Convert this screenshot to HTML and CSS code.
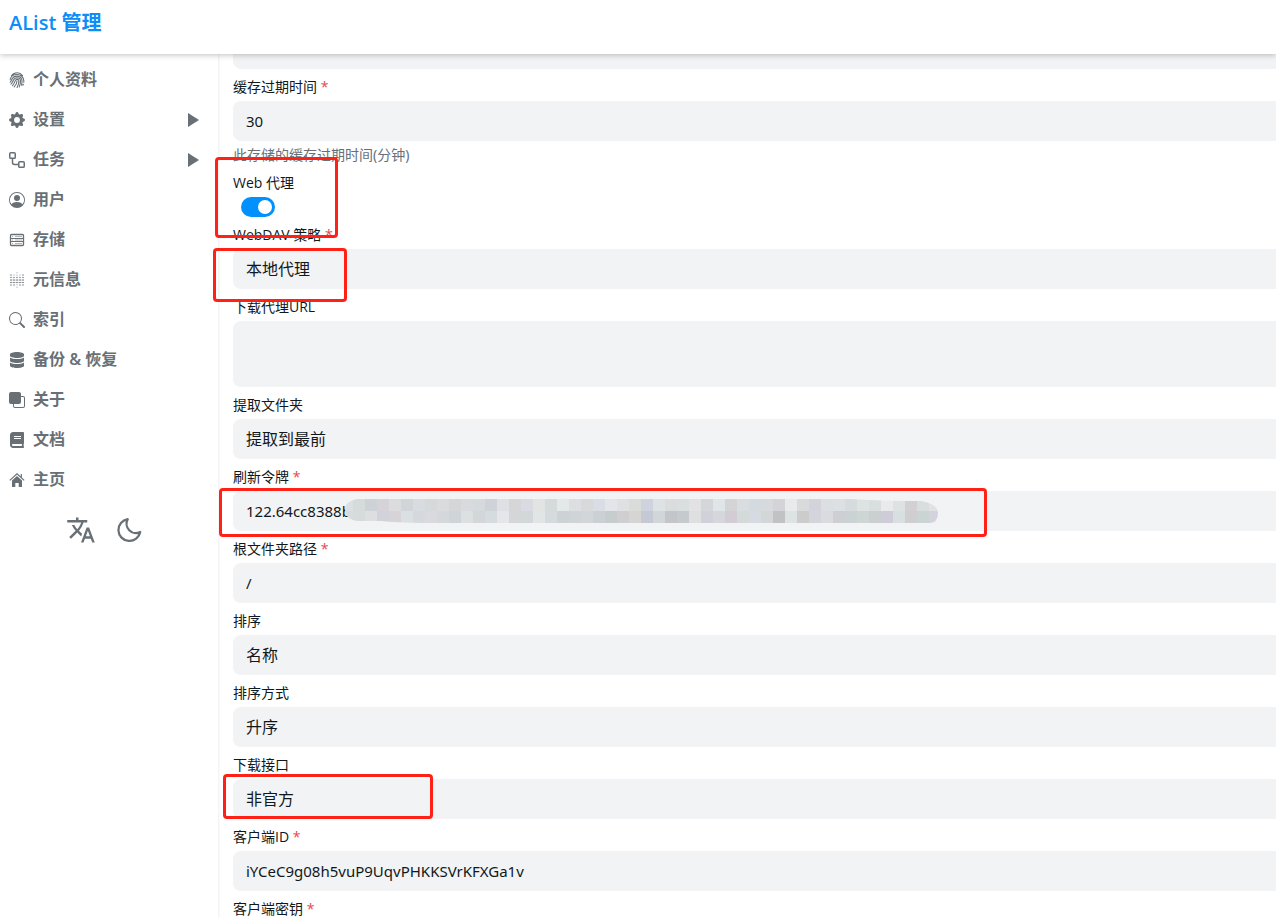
FILE: index.html
```html
<!DOCTYPE html>
<html lang="zh-CN">
<head>
<meta charset="utf-8">
<title>AList 管理</title>
<link rel="stylesheet" href="styles.css">
</head>
<body>
<header class="topbar"><h1 class="brand">AList 管理</h1></header>
<div class="layout">
  <nav class="sidebar">
    <a class="item" href="#"><svg class="icon" viewBox="0 0 16 16" fill="none" stroke="currentColor" stroke-width="1.1" stroke-linecap="round"><path d="M2.500 3.800C4 1.700 6 .8 8.200.8c2.300 0 4 1 5.300 2.800M1.200 7.400C2 4.300 4.800 2.500 8 2.500c3.700 0 6.600 2.600 6.800 6.200v1.500M1.200 10.100C3 8.800 2.500 4.200 8 4.100c3 0 5 2.100 5 4.800 0 1.700-.1 3-.5 4.400M2 12.100c2.700-2.100 1.600-6.300 6-6.400 2.100 0 3.500 1.400 3.500 3.300 0 2-.4 3.900-1.200 5.900M3.500 13.700c2.700-2.400 2-6.300 4.500-6.400 1.200 0 1.900.8 1.900 1.900 0 2.200-.7 4.300-1.800 6.300M5.200 14.900c2-2 2.700-3.700 2.800-6M14.300 12.200l-.4 1"/></svg><span class="name">个人资料</span></a>
    <a class="item" href="#"><svg class="icon" viewBox="0 0 16 16" fill="currentColor"><path d="M9.405 1.05c-.413-1.4-2.397-1.4-2.81 0l-.1.34a1.464 1.464 0 0 1-2.105.872l-.31-.17c-1.283-.698-2.686.705-1.987 1.987l.169.311c.446.82.023 1.841-.872 2.105l-.34.1c-1.4.413-1.4 2.397 0 2.810l.34.1a1.464 1.464 0 0 1 .872 2.105l-.17.31c-.698 1.283.705 2.686 1.987 1.987l.311-.169a1.464 1.464 0 0 1 2.105.872l.1.34c.413 1.4 2.397 1.4 2.810 0l.1-.34a1.464 1.464 0 0 1 2.105-.872l.31.17c1.283.698 2.686-.705 1.987-1.987l-.169-.311a1.464 1.464 0 0 1 .872-2.105l.34-.1c1.4-.413 1.4-2.397 0-2.810l-.34-.1a1.464 1.464 0 0 1-.872-2.105l.17-.31c.698-1.283-.705-2.686-1.987-1.987l-.311.169a1.464 1.464 0 0 1-2.105-.872l-.1-.34zM8 10.930a2.929 2.929 0 1 1 0-5.860 2.929 2.929 0 0 1 0 5.858z"/></svg><span class="name">设置</span><svg class="arrow" viewBox="0 0 12 14" fill="currentColor"><path d="M1 0l11 7-11 7z"/></svg></a>
    <a class="item" href="#"><svg class="icon" viewBox="0 0 16 16" fill="none" stroke="currentColor" stroke-width="1.5"><rect x=".75" y=".75" width="5.500" height="5.500" rx="1.100"/><rect x="9.750" y="9.750" width="5.500" height="5.500" rx="1.100"/><path d="M3.500 6.300v4.200a2 2 0 0 0 2 2h4.200"/></svg><span class="name">任务</span><svg class="arrow" viewBox="0 0 12 14" fill="currentColor"><path d="M1 0l11 7-11 7z"/></svg></a>
    <a class="item" href="#"><svg class="icon" viewBox="0 0 16 16" fill="currentColor"><path d="M11 6a3 3 0 1 1-6 0 3 3 0 0 1 6 0z"/><path fill-rule="evenodd" d="M0 8a8 8 0 1 1 16 0A8 8 0 0 1 0 8zm8-7a7 7 0 0 0-5.468 11.370C3.242 11.226 4.805 10 8 10s4.757 1.225 5.468 2.370A7 7 0 0 0 8 1z"/></svg><span class="name">用户</span></a>
    <a class="item" href="#"><svg class="icon" viewBox="0 0 16 16" fill="none" stroke="currentColor"><rect x="1.500" y="2.500" width="13" height="11" rx="1" stroke-width="1.300"/><path d="M1.500 6.500h13M1.500 9.500h13" stroke-width="1.100"/><path d="M3 4.500h1M6 4.500h7M3 8h1M6 8h7M3 11.500h1M6 11.500h7" stroke-width=".7" opacity=".75"/></svg><span class="name">存储</span></a>
    <a class="item" href="#"><svg class="icon" viewBox="0 0 16 16" fill="none" stroke="currentColor" stroke-width="1.400" stroke-linecap="round"><path stroke-dasharray="0 2.500" d="M2 3v10.500M14 3v10.500M5 5.500v8M11 5.500v8M8 5.500v5.500"/><path stroke-dasharray="0 2.500" opacity=".45" d="M5 3v1M11 3v1M8 .8v3M8 12.700v3"/><path opacity=".7" stroke-width="1.200" stroke-dasharray="0 2" d="M2 8h12.500M2 10.500h12.500"/></svg><span class="name">元信息</span></a>
    <a class="item" href="#"><svg class="icon" viewBox="0 0 16 16" fill="currentColor"><path d="M11.742 10.344a6.500 6.500 0 1 0-1.397 1.398h-.001c.03.04.062.078.098.115l3.850 3.850a1 1 0 0 0 1.415-1.414l-3.850-3.850a1.007 1.007 0 0 0-.115-.1zM12 6.500a5.500 5.500 0 1 1-11 0 5.500 5.500 0 0 1 11 0z"/></svg><span class="name">索引</span></a>
    <a class="item" href="#"><svg class="icon" viewBox="0 0 448 512" fill="currentColor"><path d="M448 73.143v45.714C448 159.143 347.667 192 224 192S0 159.143 0 118.857V73.143C0 32.857 100.333 0 224 0s224 32.857 224 73.143zM448 176v102.857C448 319.143 347.667 352 224 352S0 319.143 0 278.857V176c48.125 33.143 136.208 48.572 224 48.572S399.874 209.143 448 176zm0 160v102.857C448 479.143 347.667 512 224 512S0 479.143 0 438.857V336c48.125 33.143 136.208 48.572 224 48.572S399.874 369.143 448 336z"/></svg><span class="name">备份 &amp; 恢复</span></a>
    <a class="item" href="#"><svg class="icon" viewBox="0 0 16 16" fill="currentColor"><path d="M0 2a2 2 0 0 1 2-2h8a2 2 0 0 1 2 2v2h2a2 2 0 0 1 2 2v8a2 2 0 0 1-2 2H6a2 2 0 0 1-2-2v-2H2a2 2 0 0 1-2-2V2zm5 10v2a1 1 0 0 0 1 1h8a1 1 0 0 0 1-1V6a1 1 0 0 0-1-1h-2v5a2 2 0 0 1-2 2H5z"/></svg><span class="name">关于</span></a>
    <a class="item" href="#"><svg class="icon" viewBox="0 0 448 512" fill="currentColor"><path d="M448 360V24c0-13.300-10.700-24-24-24H96C43 0 0 43 0 96v320c0 53 43 96 96 96h328c13.300 0 24-10.700 24-24v-16c0-7.500-3.500-14.300-8.900-18.700-4.200-15.400-4.200-59.300 0-74.700 5.400-4.300 8.900-11.100 8.900-18.600zM128 134c0-3.300 2.700-6 6-6h212c3.300 0 6 2.700 6 6v20c0 3.300-2.700 6-6 6H134c-3.300 0-6-2.700-6-6v-20zm0 64c0-3.300 2.700-6 6-6h212c3.300 0 6 2.700 6 6v20c0 3.300-2.700 6-6 6H134c-3.300 0-6-2.700-6-6v-20zm253.400 250H96c-17.700 0-32-14.300-32-32 0-17.600 14.400-32 32-32h285.400c-1.900 17.100-1.900 46.900 0 64z"/></svg><span class="name">文档</span></a>
    <a class="item" href="#"><svg class="icon" viewBox="0 0 16 16" fill="currentColor"><path d="M8 4l5 4.400V14.500a.5.5 0 0 1-.5.5H9.700v-4H6.300v4H3.500a.5.5 0 0 1-.5-.5V8.400z"/><path d="M.8 8.400L8 1.900l7.200 6.500M12.300 2v3.500" fill="none" stroke="currentColor" stroke-width="1.200"/></svg><span class="name">主页</span></a>
    <div class="tools">
      <button class="tool" type="button" aria-label="语言"><svg viewBox="0 0 24 24" fill="currentColor"><path d="M12.870 15.070l-2.540-2.510.03-.03A17.520 17.520 0 0 0 14.070 6H17V4h-7V2H8v2H1v2h11.170C11.500 7.920 10.440 9.750 9 11.350 8.070 10.320 7.300 9.190 6.690 8h-2c.73 1.630 1.730 3.170 2.980 4.560l-5.090 5.020L4 19l5-5 3.110 3.110.76-2.040zM18.500 10h-2L12 22h2l1.120-3h4.750L21 22h2l-4.500-12zm-2.620 7l1.620-4.330L19.120 17h-3.240z"/></svg></button>
      <button class="tool" type="button" aria-label="深色模式"><svg viewBox="0 0 24 24" fill="none" stroke="currentColor" stroke-width="1.800" stroke-linejoin="round"><path d="M11 3.300A8.800 8.800 0 1 0 21 13.600 7.500 7.500 0 0 1 11 3.300z"/></svg></button>
    </div>
  </nav>
  <main class="content">
    <form class="form">
      <input class="field first" aria-label="备注">
      <div class="group"><label for="cache">缓存过期时间 <i>*</i></label><input class="field" id="cache" value="30"><p class="help">此存储的缓存过期时间(分钟)</p></div>
      <div class="group"><label for="proxy">Web 代理</label><input class="switch" id="proxy" type="checkbox" checked></div>
      <div class="group"><label for="dav">WebDAV 策略 <i>*</i></label><select class="field" id="dav"><option>本地代理</option></select></div>
      <div class="group"><label for="url">下载代理URL</label><textarea class="field area" id="url"></textarea></div>
      <div class="group"><label for="folder">提取文件夹</label><select class="field" id="folder"><option>提取到最前</option></select></div>
      <div class="group"><label for="token">刷新令牌 <i>*</i></label><div class="masked"><input class="field" id="token" value="122.64cc8388b"><svg class="mosaic" id="mosaic" viewBox="0 0 600 24"><defs><clipPath id="edge"><path d="M16 0H510Q540 2 580 2Q597 5 597 14Q597 24 588 24H100Q60 24 40 22H16Q4 20 4 11Q4 2 16 0z"/></clipPath></defs><g id="cells" clip-path="url(#edge)"></g></svg></div></div>
      <div class="group"><label for="root">根文件夹路径 <i>*</i></label><input class="field" id="root" value="/"></div>
      <div class="group"><label for="order">排序</label><select class="field" id="order"><option>名称</option></select></div>
      <div class="group"><label for="dir">排序方式</label><select class="field" id="dir"><option>升序</option></select></div>
      <div class="group"><label for="api">下载接口</label><select class="field" id="api"><option>非官方</option></select></div>
      <div class="group"><label for="cid">客户端ID <i>*</i></label><input class="field" id="cid" value="iYCeC9g08h5vuP9UqvPHKKSVrKFXGa1v"></div>
      <div class="group"><label for="secret">客户端密钥 <i>*</i></label><input class="field" id="secret"></div>
    </form>
  </main>
</div>
<div class="mark mark-proxy"></div>
<div class="mark mark-dav"></div>
<div class="mark mark-token"></div>
<div class="mark mark-api"></div>
<script src="mosaic.js"></script>
</body>
</html>
```
FILE: styles.css
```css
* { box-sizing: border-box; }
body {
  margin: 0;
  height: 100vh;
  overflow: hidden;
  display: flex;
  flex-direction: column;
  position: relative;
  background: #fff;
  color: #11181c;
  font-family: "Noto Sans", "Noto Sans CJK SC", sans-serif;
  font-size: 16px;
}
.topbar {
  position: relative;
  z-index: 1;
  flex: none;
  height: 54px;
  padding: 8px 9px;
  background: #fff;
  box-shadow: 0 1px 6px rgba(0, 0, 0, .25);
}
.brand {
  margin: 0;
  color: #0d8df8;
  font-family: "Open Sans", "Noto Sans CJK SC", sans-serif;
  font-size: 20px;
  line-height: 30px;
  font-weight: 600;
}
.layout { display: flex; flex: 1; min-height: 0; }
.sidebar {
  flex: none;
  width: 218px;
  padding: 6px 9px;
  box-shadow: 0 0 3px rgba(0, 0, 0, .12);
}
.item {
  display: flex;
  align-items: center;
  gap: 8px;
  height: 40px;
  padding-right: 10px;
  color: #687076;
  font-weight: 600;
  text-decoration: none;
}
.icon { width: 16px; height: 16px; }
.name { flex: 1; padding-bottom: 2px; line-height: 24px; }
.arrow { width: 12px; height: 14px; }
.tools { display: flex; justify-content: center; gap: 16px; padding: 14px 9px 0 0; }
.tool { width: 32px; height: 32px; padding: 1px; border: 0; background: none; color: #687076; }
.tool svg { display: block; width: 30px; height: 30px; }
.content { flex: 1; min-width: 0; overflow: hidden; padding-left: 15px; }
.form { display: flex; flex-direction: column; gap: 8px; margin-top: -25px; }
.group { display: flex; flex-direction: column; gap: 4px; flex: none; }
.group label { font-family: "Open Sans", "Noto Sans CJK SC", sans-serif; font-size: 14px; line-height: 20px; height: 20px; font-weight: 400; }
.group i { color: #e5484d; font-style: normal; }
.field {
  appearance: none;
  display: block;
  flex: none;
  width: 100%;
  height: 40px;
  margin: 0;
  padding: 0 13px;
  border: 0;
  border-radius: 8px 0 0 8px;
  background: #f1f3f5;
  color: inherit;
  font: inherit;
  font-size: 15px;
}
select.field { font-size: 16px; }
.area { height: 66px; resize: none; }
.help { margin: 0; color: #687076; font-size: 14px; line-height: 20px; height: 20px; }
.switch {
  appearance: none;
  width: 34px;
  height: 20px;
  margin: 0 8px;
  padding: 3px;
  border-radius: 10px;
  background: #0091ff;
}
.switch::before { content: ""; display: block; width: 14px; height: 14px; margin-left: auto; border-radius: 50%; background: #fff; }
.masked { position: relative; }
.mosaic { position: absolute; left: 108px; top: 8px; width: 600px; height: 24px; }
.mark { position: absolute; z-index: 2; border: 3px solid #ff2116; border-radius: 4px; pointer-events: none; }
.mark-proxy { left: 215px; top: 157px; width: 123px; height: 81px; }
.mark-dav { left: 213px; top: 248px; width: 134px; height: 54px; }
.mark-token { left: 219px; top: 488px; width: 768px; height: 49px; }
.mark-api { left: 223px; top: 774px; width: 210px; height: 45px; }
```
FILE: mosaic.js
```js
const rows = [
  "dce0e2 d5dada cdd2d6 d6d3d8 dcdcde d2d5d8 d8dbdf d5d9da dadbde d5d6d8 d8dadd d5dadd cfd2d8 dfe0e3 d6d6d8 d8dbe2 e1e4e3 d5dbda e2e9e8 dddee2 d7d9db dadde3 e3e5ea dfe0e1 dadcda cfd3dd dde2e4 dbdcde d9dfe1 e2e2e4 d5d6d9 e0e5e8 d4d4d7 dadde0 d4dbe0 d7dadd d4d4d8 e8eaeb d7dbdc d3d4db dbdfe2 dce0e3 d6dbde dde2e3 d8dfde e8eaec dfe2e3 d2d0d3 d8dddd e0e3e5",
  "d9dcde d6dcda dbdfe0 d2d2da d8d3d7 dadfe1 d5d9dd dadade d4d8da cfd4d8 dce0e1 d3d7d9 d5dbde e4e6e9 d5d6d7 d2d8da e2e5e6 d5dadc cdd3d4 cfd5d7 d3d6d9 cbd0d5 c7cccd cfced1 d6d5d3 c5c9d3 d1d6d8 c4c5c9 c5cacd dedfe1 d0d2d9 d6d7dc d2cdd4 d4d9da d5dbe1 d3d7d7 c0c2c4 dde2e3 cdcccd d4d5dc d9dbde cecfd3 cbd2d4 ced6d5 cbcfd0 cdccd8 d8dfe0 cfced1 cad4d2 d2d3dc"
];
const cells = document.getElementById("cells");
rows.forEach((row, y) => row.split(" ").forEach((color, x) => {
  const cell = document.createElementNS("http://www.w3.org/2000/svg", "rect");
  cell.setAttribute("x", x * 12);
  cell.setAttribute("y", y * 12);
  cell.setAttribute("width", 12);
  cell.setAttribute("height", 12);
  cell.setAttribute("fill", "#" + color);
  cells.append(cell);
}));
```
